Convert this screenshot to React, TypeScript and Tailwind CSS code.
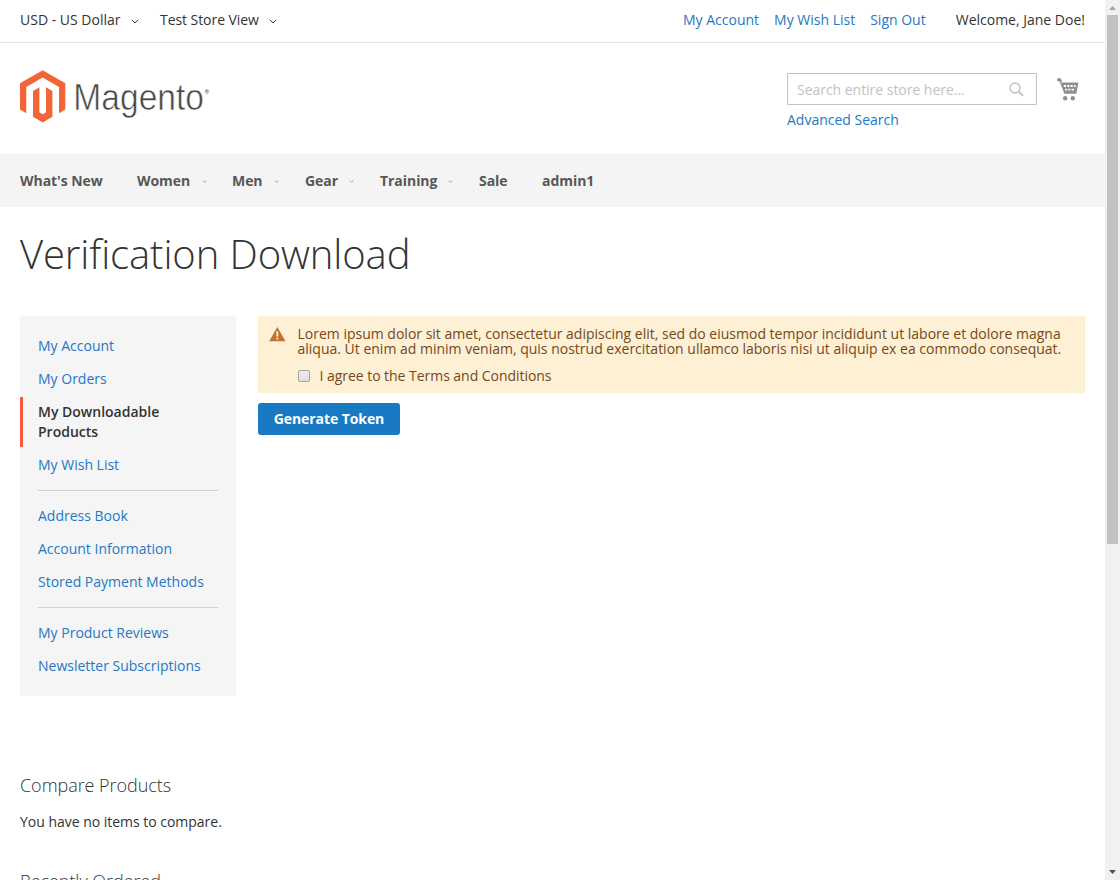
import React from "react";

function Chevron({ className }: { className: string }) {
  return (
    <svg viewBox="0 0 8 5" className={className} fill="none" stroke="currentColor" strokeWidth="1">
      <path d="M0.8 0.8 L4 3.9 L7.2 0.8" />
    </svg>
  );
}

function Link({ children }: { children: React.ReactNode }) {
  return (
    <a href="#" className="text-[#2478c6]">
      {children}
    </a>
  );
}

function TopBar() {
  return (
    <div className="flex h-[43px] items-start justify-between border-b border-[#e1e1e1] px-5 pt-[10px]">
      <div className="flex items-center">
        <span className="w-[100px] whitespace-nowrap">USD - US Dollar</span>
        <Chevron className="mt-[3px] ml-[11px] h-[5px] w-[8px]" />
        <span className="ml-[21px] w-[98px] whitespace-nowrap tracking-[-0.06px]">Test Store View</span>
        <Chevron className="mt-[3px] ml-[11px] h-[5px] w-[8px]" />
      </div>
      <div className="flex">
        <Link>My Account</Link>
        <span className="ml-[15px]"><Link>My Wish List</Link></span>
        <span className="ml-[15px]"><Link>Sign Out</Link></span>
        <span className="ml-[30px]">Welcome, Jane Doe!</span>
      </div>
    </div>
  );
}

function Logo() {
  return (
    <svg width="190" height="53" viewBox="0 0 190 53" className="mt-[27px]">
      <g fill="#f26539">
        <path d="M22.7 0.3 L45.3 13.3 V39.6 L39 43.2 V17 L22.6 7.6 L6.3 17 V43.2 L0 39.6 V13.3 Z" />
        <path d="M19.4 17.3 V42.2 L22.7 44.2 L26 42.2 V17.3 L32.4 21 V46.8 L22.7 52.5 L13 46.8 V21 Z" />
      </g>
      <text x="53.3" y="39.6" fontFamily="'Liberation Sans', Arial, sans-serif" fontSize="37.5" fill="#484848" stroke="#fff" strokeWidth="0.6" textLength="130.7" lengthAdjust="spacingAndGlyphs">Magento</text>
      <text x="184.5" y="23.5" fontFamily="Roboto, sans-serif" fontSize="6" fill="#4d4d4d">®</text>
    </svg>
  );
}

function Cart() {
  return (
    <svg width="22" height="23" viewBox="0 0 22 23" className="mt-[35px] mr-[6px] ml-5">
      <path d="M0.2 1.6 H2.8 L4 4" fill="none" stroke="#8f8f8f" strokeWidth="2.6" />
      <path d="M3 4.5 H21.4 L19.4 15.8 H7.4 Z" fill="#8f8f8f" />
      <path d="M6.8 8 h2.2 M10.2 8 h2.2 M13.6 8 h2.2 M17 8 h1.6 M8.2 11.6 h2 M11.4 11.6 h2 M14.6 11.6 h2.2" stroke="#fff" strokeWidth="1.9" />
      <circle cx="8.2" cy="20.2" r="2.2" fill="#8f8f8f" />
      <circle cx="15.8" cy="20.2" r="2.2" fill="#8f8f8f" />
    </svg>
  );
}

function Header() {
  return (
    <header className="flex h-[111px] items-start justify-between px-5">
      <Logo />
      <div className="flex items-start">
        <div className="mt-[30px] w-[250px]">
          <div className="flex h-8 items-center justify-between rounded-[1px] border border-[#c2c2c2] pr-[12px] pl-[9px]">
            <span className="pt-[2px] tracking-[-0.03px] text-[#c2c2c2]">Search entire store here...</span>
            <svg width="15" height="15" viewBox="0 0 15 15" fill="none" stroke="#c2c2c2">
              <circle cx="6" cy="6" r="4.9" strokeWidth="1.5" />
              <path d="M9.6 9.6 L14 13.8" strokeWidth="2" />
            </svg>
          </div>
          <div className="mt-[5px]"><Link>Advanced Search</Link></div>
        </div>
        <Cart />
      </div>
    </header>
  );
}

const menu: [string, boolean, string, string][] = [
  ["What's New", false, "w-[117px]", "w-[83px]"],
  ["Women", true, "w-[95px]", "w-[53px]"],
  ["Men", true, "w-[73px]", "w-[30px]"],
  ["Gear", true, "w-[75px]", "w-[32px]"],
  ["Training", true, "w-[99px]", "w-[56px]"],
  ["Sale", false, "w-[63px]", "w-[30px]"],
  ["admin1", false, "w-[60px]", "w-[53px]"],
];

function Nav() {
  return (
    <nav className="flex h-[53px] items-center bg-[#f4f4f4] px-5 font-bold tracking-[-0.05px] text-[#575757]">
      {menu.map(([label, arrow, width, labelWidth]) => (
        <div key={label} className={"flex shrink-0 items-center " + width}>
          <span className={"whitespace-nowrap " + labelWidth}>{label}</span>
          {arrow && <Chevron className="mt-[2px] ml-[12px] h-[3px] w-[5px] stroke-[1.5] text-[#999]" />}
        </div>
      ))}
    </nav>
  );
}

function SideLink({ label }: { label: string }) {
  return <li className="py-[5px] pl-[18px]"><Link>{label}</Link></li>;
}

function Divider() {
  return <li className="mx-[18px] my-[7px] h-px bg-[#d1d1d1]" />;
}

function Sidebar() {
  return (
    <ul className="flex h-[380px] w-[216px] shrink-0 flex-col gap-[3px] bg-[#f5f5f5] pt-[15px]">
      <SideLink label="My Account" />
      <SideLink label="My Orders" />
      <li className="border-l-[3px] border-[#fb583d] py-[5px] pr-10 pl-[15px] font-semibold text-[#333]">My Downloadable Products</li>
      <SideLink label="My Wish List" />
      <Divider />
      <SideLink label="Address Book" />
      <SideLink label="Account Information" />
      <SideLink label="Stored Payment Methods" />
      <Divider />
      <SideLink label="My Product Reviews" />
      <SideLink label="Newsletter Subscriptions" />
    </ul>
  );
}

function Notice() {
  return (
    <div className="flex h-[77px] bg-[#fdf0d5] pl-[11px] text-[#75481a]">
      <svg width="17" height="15" viewBox="0 0 17 15" className="mt-[11px] shrink-0">
        <path d="M8.3 0 L16.5 14.2 H0.2 Z" fill="#c07330" />
        <path d="M8.3 4.2 V9.5 M8.3 10.7 V12.6" stroke="#fdf0d5" strokeWidth="1.8" />
      </svg>
      <div className="ml-[11.5px] pt-[10px] leading-[15px]">
        <p className="whitespace-nowrap">
          Lorem ipsum dolor sit amet, consectetur adipiscing elit, sed do eiusmod tempor incididunt ut labore et dolore magna
          <br />
          aliqua. Ut enim ad minim veniam, quis nostrud exercitation ullamco laboris nisi ut aliquip ex ea commodo consequat.
        </p>
        <label className="mt-[10px] flex h-5 items-center leading-5 tracking-[-0.04px]">
          <span className="h-3 w-3 rounded-[2px] border border-[#a5a5a5] bg-linear-to-b from-[#ededed] to-[#dedede]" />
          <span className="ml-[10px]">I agree to the Terms and Conditions</span>
        </label>
      </div>
    </div>
  );
}

function Scrollbar() {
  return (
    <div className="flex w-[15px] shrink-0 flex-col items-center bg-[#f1f1f1]">
      <svg width="15" height="15" viewBox="0 0 15 15"><path d="M4 10 L7.5 6 L11 10 Z" fill="#a3a3a3" /></svg>
      <div className="h-[529px] w-[11px] bg-[#c1c1c1]" />
      <svg width="15" height="15" viewBox="0 0 15 15" className="mt-auto"><path d="M4 5 L7.5 9 L11 5 Z" fill="#505050" /></svg>
    </div>
  );
}

export default function App() {
  return (
    <div className="flex h-[880px] w-[1120px] overflow-hidden bg-white font-['Open_Sans',sans-serif] text-[14px] leading-5 text-[#333]">
      <div className="h-[880px] w-[1105px] overflow-hidden">
        <TopBar />
        <Header />
        <Nav />
        <main className="px-5">
          <h1 className="pt-[25px] text-[40px] leading-[44px] font-light tracking-[-0.1px]">Verification Download</h1>
          <div className="mt-[40px] flex gap-[22px]">
            <Sidebar />
            <section className="grow">
              <Notice />
              <button className="mt-[10px] block h-8 w-[142px] rounded-[3px] bg-[#1979c3] font-bold tracking-[-0.08px] text-white">Generate Token</button>
            </section>
          </div>
          <h2 className="mt-[77px] text-[18px] leading-6 font-light tracking-[-0.05px]">Compare Products</h2>
          <p className="mt-[15px] tracking-[-0.02px]">You have no items to compare.</p>
          <h2 className="mt-[37px] text-[18px] leading-6 font-light tracking-[-0.05px]">Recently Ordered</h2>
        </main>
      </div>
      <Scrollbar />
    </div>
  );
}
